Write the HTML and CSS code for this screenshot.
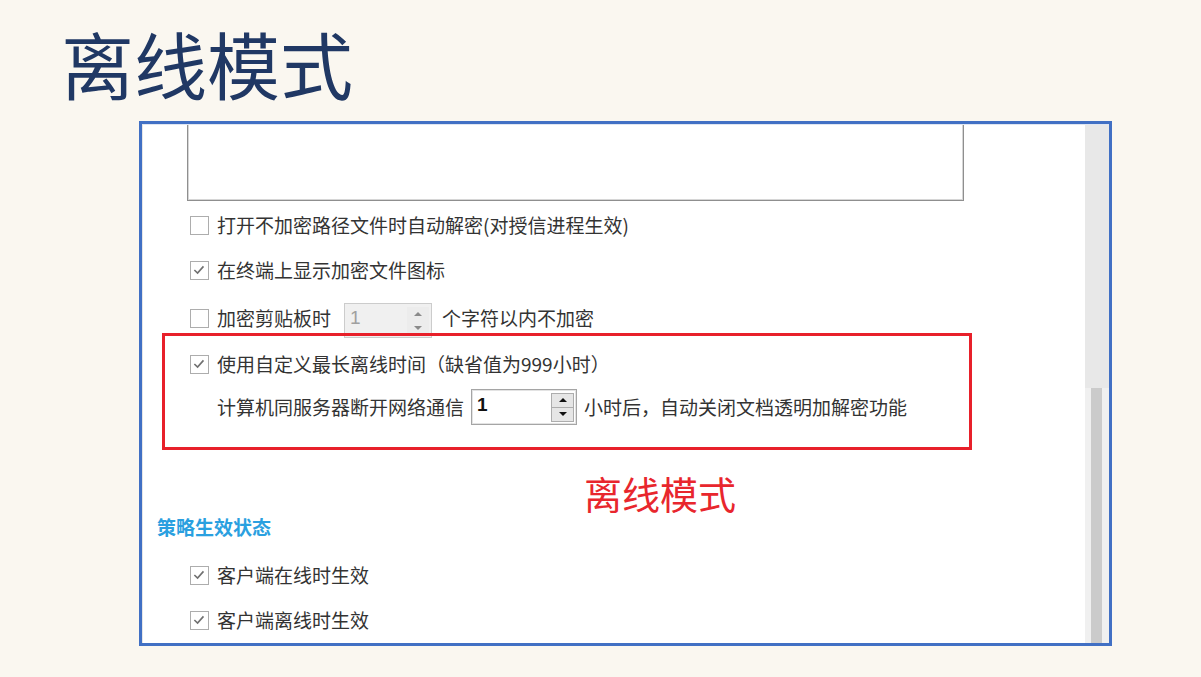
FILE: index.html
```html
<!DOCTYPE html>
<html lang="zh-CN">
<head>
<meta charset="utf-8">
<title>离线模式</title>
<link rel="stylesheet" href="styles.css">
</head>
<body>
<h1 class="title">离线模式</h1>
<div class="frame">
  <div class="pane">
    <div class="textbox"></div>
    <div class="row r1"><span class="cb"></span><span class="lbl">打开不加密路径文件时自动解密(对授信进程生效)</span></div>
    <div class="row r2"><span class="cb"><svg viewBox="0 0 19 19"><path d="M4 9.5 L7.8 13.2 L14.8 5.2"/></svg></span><span class="lbl">在终端上显示加密文件图标</span></div>
    <div class="row r3"><span class="cb"></span><span class="lbl">加密剪贴板时</span>
      <span class="spin spin-off"><span class="val">1</span><span class="btns"><span class="btn"><i class="up"></i></span><span class="btn"><i class="down"></i></span></span></span>
      <span class="lbl after">个字符以内不加密</span></div>
    <div class="row r4"><span class="cb"><svg viewBox="0 0 19 19"><path d="M4 9.5 L7.8 13.2 L14.8 5.2"/></svg></span><span class="lbl">使用自定义最长离线时间（缺省值为999小时）</span></div>
    <div class="row r5"><span class="lbl">计算机同服务器断开网络通信</span>
      <span class="spin spin-on"><span class="val">1</span><span class="btns"><span class="btn"><i class="up"></i></span><span class="btn"><i class="down"></i></span></span></span>
      <span class="lbl after2">小时后，自动关闭文档透明加解密功能</span></div>
    <div class="note">离线模式</div>
    <div class="heading">策略生效状态</div>
    <div class="row r6"><span class="cb"><svg viewBox="0 0 19 19"><path d="M4 9.5 L7.8 13.2 L14.8 5.2"/></svg></span><span class="lbl">客户端在线时生效</span></div>
    <div class="row r7"><span class="cb"><svg viewBox="0 0 19 19"><path d="M4 9.5 L7.8 13.2 L14.8 5.2"/></svg></span><span class="lbl">客户端离线时生效</span></div>
    <div class="highlight"></div>
  </div>
  <div class="scrollbar">
    <div class="track-top"></div>
    <div class="track-bottom"><div class="thumb"></div></div>
  </div>
</div>
</body>
</html>
```
FILE: styles.css
```css
html, body {
  margin: 0;
  padding: 0;
}
body {
  background: #faf7f0;
  width: 1201px;
  height: 677px;
  overflow: hidden;
  font-family: "Noto Sans CJK SC", "Microsoft YaHei", sans-serif;
}
.title {
  margin: 0;
  padding: 26px 0 0 61px;
  height: 95px;
  box-sizing: border-box;
  font-size: 73px;
  line-height: 73px;
  font-weight: 400;
  color: #203864;
  font-family: "Noto Sans CJK SC", sans-serif;
}
.frame {
  margin: 26px 0 0 139px;
  width: 973px;
  height: 525px;
  box-sizing: border-box;
  border: 3px solid #4170c4;
  display: flex;
  background: #fff;
}
.pane {
  position: relative;
  flex: 1;
  border-top: 1px solid #dfe6f2;
  border-left: 1px solid #e6e6e6;
  overflow: hidden;
  display: flex;
  flex-direction: column;
  color: #333;
  font-size: 19px;
}
.textbox {
  margin-left: 44px;
  width: 777px;
  height: 76px;
  flex: none;
  box-sizing: border-box;
  border: 1px solid #8f8f8f;
  border-top: none;
  box-shadow: inset 1px 0 0 #d6d6d6, inset -1px 0 0 #d6d6d6, inset 0 -1px 0 #d6d6d6;
}
.row {
  display: flex;
  align-items: center;
  padding-left: 47px;
  flex: none;
  white-space: nowrap;
}
.r1 { height: 48px; }
.r2 { height: 42px; }
.r3 { height: 54px; }
.r4 { height: 38px; }
.r5 { height: 48px; padding-left: 74px; }
.r6 { height: 54px; }
.r7 { height: 36px; }
.lbl { line-height: 22px; }
.cb {
  width: 19px;
  height: 19px;
  box-sizing: border-box;
  border: 1.5px solid #adadad;
  background: #fff;
  margin-right: 8px;
  flex: none;
  display: block;
}
.cb svg {
  display: block;
  width: 16px;
  height: 16px;
}
.cb svg path {
  fill: none;
  stroke: #707070;
  stroke-width: 1.9;
}
.spin {
  display: flex;
  align-items: center;
  box-sizing: border-box;
  flex: none;
}
.spin-off {
  width: 88px;
  height: 35px;
  margin-left: 13px;
  margin-top: 5px;
  background: #f0f0f0;
  border: 1px solid #cccccc;
  color: #a0a0a0;
}
.spin-on {
  width: 106px;
  height: 36px;
  margin-left: 7px;
  background: #fff;
  border: 1px solid #a5a5a5;
  box-shadow: inset 0 0 0 1px #e3e3e3;
  color: #111;
}
.val {
  flex: 1;
  padding-left: 5px;
  font-family: "Liberation Sans", Arial, sans-serif;
  font-size: 19px;
  line-height: 22px;
  align-self: flex-start;
  padding-top: 3px;
}
.spin-on .val { font-weight: 700; padding-top: 4px; }
.btns {
  display: flex;
  flex-direction: column;
  margin-right: 2px;
}
.btn {
  display: flex;
  align-items: center;
  justify-content: center;
  width: 22px;
  height: 14px;
  box-sizing: border-box;
}
.spin-off .btn { background: #ececec; }
.spin-on .btn {
  width: 23px;
  height: 15px;
  background: #e6e6e6;
  border: 1px solid #adadad;
}
.spin-on .btn + .btn { margin-top: -1px; }
.up, .down {
  width: 0;
  height: 0;
  border-left: 4px solid transparent;
  border-right: 4px solid transparent;
}
.up { border-bottom: 4px solid #8a8a8a; }
.down { border-top: 4px solid #8a8a8a; }
.spin-on .up { border-bottom-color: #111; }
.spin-on .down { border-top-color: #111; }
.after { margin-left: 10px; }
.after2 { margin-left: 7px; }
.note {
  flex: none;
  margin: 39px 0 0 441px;
  height: 46px;
  font-size: 38px;
  line-height: 46px;
  color: #e8262d;
}
.heading {
  flex: none;
  margin: -10px 0 0 14px;
  height: 42px;
  line-height: 42px;
  font-size: 19px;
  color: #2aa0e0;
  font-weight: 700;
}
.highlight {
  position: absolute;
  left: 19px;
  top: 208px;
  width: 810px;
  height: 117px;
  box-sizing: border-box;
  border: 3px solid #e8202a;
  pointer-events: none;
}
.scrollbar {
  width: 24px;
  flex: none;
  display: flex;
  flex-direction: column;
  background: #f0f0f0;
}
.track-top {
  height: 263px;
  background: #e8e8e8;
  border-top: 1px solid #dfe6f2;
}
.track-bottom {
  flex: 1;
  display: flex;
  justify-content: center;
  padding-right: 2px;
}
.thumb {
  width: 11px;
  background: #cbcbcb;
}
```
